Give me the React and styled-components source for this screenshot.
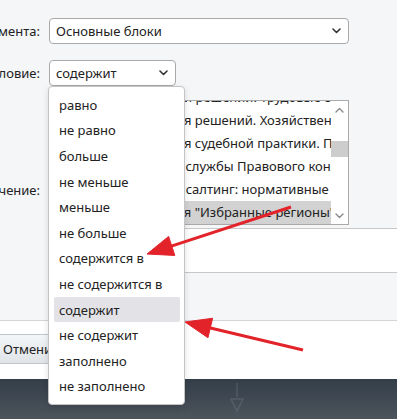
import React from 'react';
import styled, { createGlobalStyle } from 'styled-components';

const GlobalStyle = createGlobalStyle`
    html, body {
        margin: 0;
        padding: 0;
    }
    body {
        width: 397px;
        height: 419px;
        overflow: hidden;
        background: #f4f6f8;
        font-family: "Noto Sans", "Open Sans", sans-serif;
        font-size: 13px;
        color: #222;
    }
`;

const Page = styled.div`
    position: relative;
    width: 397px;
    height: 419px;
    overflow: hidden;
    display: flex;
    flex-direction: column;
`;

const Form = styled.div`
    display: flex;
    flex-direction: column;
    margin-left: -60px;
`;

const Row = styled.div`
    display: flex;
    align-items: center;
    gap: 9px;
    margin-top: ${props => props.top}px;
    position: relative;
    z-index: ${props => (props.raised ? 5 : 'auto')};
`;

const Label = styled.div`
    width: 100px;
    flex: none;
    text-align: right;
    white-space: nowrap;
    padding-top: ${props => props.offset || 0}px;
`;

const SelectWrap = styled.div`
    position: relative;
`;

const Select = styled.div`
    box-sizing: border-box;
    width: ${props => props.width}px;
    height: 26px;
    display: flex;
    align-items: center;
    justify-content: space-between;
    padding: 0 7px 0 6px;
    background: #fff;
    border: 1px solid #a9a9a9;
    border-radius: 4px;
`;

const Dropdown = styled.ul`
    position: absolute;
    top: 26px;
    left: -1px;
    z-index: 10;
    box-sizing: border-box;
    width: 137px;
    margin: 0;
    padding: 5px 4px 5px 5px;
    list-style: none;
    background: #fff;
    border: 1px solid #c4c4c4;
    border-radius: 4px;
    box-shadow: 0 2px 6px rgba(0, 0, 0, 0.12);
`;

const Option = styled.li`
    height: 25.6px;
    display: flex;
    align-items: center;
    padding-left: 5px;
    white-space: nowrap;
    border-radius: 2px;
    background: ${props => (props.active ? '#e2e2e7' : 'transparent')};
`;

const ValueColumn = styled.div`
    display: flex;
    flex-direction: column;
    flex: 1;
`;

const ListBox = styled.div`
    box-sizing: border-box;
    width: 300px;
    height: 125px;
    display: flex;
    background: #fff;
    border: 1px solid #a9a9a9;
    overflow: hidden;
`;

const ListItems = styled.div`
    flex: 1;
    overflow: hidden;
`;

const ListInner = styled.div`
    margin-top: -15px;
`;

const ListItem = styled.div`
    height: 23px;
    line-height: 23px;
    padding-left: 3px;
    white-space: nowrap;
    background: ${props => (props.selected ? '#d2d2d2' : 'transparent')};
`;

const ScrollBar = styled.div`
    width: 17px;
    flex: none;
    display: flex;
    flex-direction: column;
    background: #fff;
`;

const ScrollArrow = styled.div`
    height: 17px;
    display: flex;
    align-items: center;
    justify-content: center;
`;

const ScrollThumb = styled.div`
    height: 16px;
    margin-top: 23px;
    background: #cdcdcd;
`;

const ScrollTrack = styled.div`
    flex: 1;
`;

const ValueBox = styled.div`
    height: 43px;
    margin-top: 3px;
    margin-right: -60px;
    background: #fff;
    border-top: 1px solid #c8c8c8;
    border-bottom: 1px solid #c8c8c8;
`;

const Spacer = styled.div`
    height: 47px;
`;

const Footer = styled.div`
    height: 59px;
    display: flex;
    align-items: flex-start;
    padding-top: 13px;
    box-sizing: border-box;
    background: #fff;
    border-top: 1px solid #d3d6d9;
`;

const Button = styled.button`
    height: 30px;
    margin-left: -10px;
    padding: 0 12px;
    font-family: inherit;
    font-size: 13px;
    color: #222;
    background: linear-gradient(#f3f5f7, #e0e4e8);
    border: 1px solid #c0c6cc;
    border-radius: 3px;
`;

const TaskBar = styled.div`
    flex: 1;
    display: flex;
    align-items: flex-start;
    padding-left: 229px;
    padding-top: 4px;
    background: linear-gradient(#343e49, #4c545c);
`;

const Annotations = styled.svg`
    position: absolute;
    left: 0;
    top: 0;
    z-index: 20;
    pointer-events: none;
`;

const Chevron = ({ up, color = '#333', width = 1.6 }) => (
    <svg width="9" height="6" viewBox="0 0 9 6">
        <path
            d={up ? 'M1 5 L4.5 1.5 L8 5' : 'M1 1 L4.5 4.5 L8 1'}
            fill="none"
            stroke={color}
            strokeWidth={width}
            strokeLinecap="round"
            strokeLinejoin="round"
        />
    </svg>
);

const options = [
    'равно',
    'не равно',
    'больше',
    'не меньше',
    'меньше',
    'не больше',
    'содержится в',
    'не содержится в',
    'содержит',
    'не содержит',
    'заполнено',
    'не заполнено',
];

const values = [
    'Общая энциклопедии решений. Трудовые споры',
    'Общая энциклопедия решений. Хозяйственные споры',
    'Общая энциклопедия судебной практики. Позиции судов',
    'Аналитика и отзывы службы Правового консалтинга',
    'Итоги. Правовой консалтинг: нормативные акты',
    'Областная коллекция "Избранные регионы"',
];

function Arrow({ x1, y1, x2, y2 }) {
    const dx = x2 - x1;
    const dy = y2 - y1;
    const len = Math.hypot(dx, dy);
    const ux = dx / len;
    const uy = dy / len;
    const bx = x2 - ux * 26;
    const by = y2 - uy * 26;
    const px = -uy * 10;
    const py = ux * 10;
    return (
        <g fill="#e3232a" stroke="#e3232a">
            <line x1={x1} y1={y1} x2={bx + ux * 2} y2={by + uy * 2} strokeWidth="3" />
            <polygon
                points={`${x2},${y2} ${bx + px},${by + py} ${bx - px},${by - py}`}
                strokeWidth="1"
                strokeLinejoin="round"
            />
        </g>
    );
}

export default function App() {
    return (
        <Page>
            <GlobalStyle />
            <Form>
                <Row top={18}>
                    <Label>Тип фрагмента:</Label>
                    <Select width={300}>
                        <span>Основные блоки</span>
                        <Chevron />
                    </Select>
                </Row>
                <Row top={16} raised>
                    <Label>Условие:</Label>
                    <SelectWrap>
                        <Select width={127}>
                            <span>содержит</span>
                            <Chevron />
                        </Select>
                        <Dropdown>
                            {options.map(o => (
                                <Option key={o} active={o === 'содержит'}>{o}</Option>
                            ))}
                        </Dropdown>
                    </SelectWrap>
                </Row>
                <Row top={14}>
                    <Label offset={6}>Значение:</Label>
                    <ValueColumn>
                        <ListBox>
                            <ListItems>
                                <ListInner>
                                    {values.map((v, i) => (
                                        <ListItem key={v} selected={i === values.length - 1}>{v}</ListItem>
                                    ))}
                                </ListInner>
                            </ListItems>
                            <ScrollBar>
                                <ScrollArrow><Chevron up color="#8a8a8a" width={1.4} /></ScrollArrow>
                                <ScrollThumb />
                                <ScrollTrack />
                                <ScrollArrow><Chevron color="#8a8a8a" width={1.4} /></ScrollArrow>
                            </ScrollBar>
                        </ListBox>
                        <ValueBox />
                    </ValueColumn>
                </Row>
            </Form>
            <Spacer />
            <Footer>
                <Button>Отменить</Button>
            </Footer>
            <TaskBar>
                <svg width="16" height="30" viewBox="0 0 16 30" opacity="0.25">
                    <path d="M8 0 V14 M2 16 H14 L8 28 Z" fill="none" stroke="#8a96a2" strokeWidth="1.5" />
                </svg>
            </TaskBar>
            <Annotations width="397" height="419">
                <Arrow x1={291} y1={207} x2={147} y2={254} />
                <Arrow x1={303} y1={350} x2={185} y2={322} />
            </Annotations>
        </Page>
    );
}
